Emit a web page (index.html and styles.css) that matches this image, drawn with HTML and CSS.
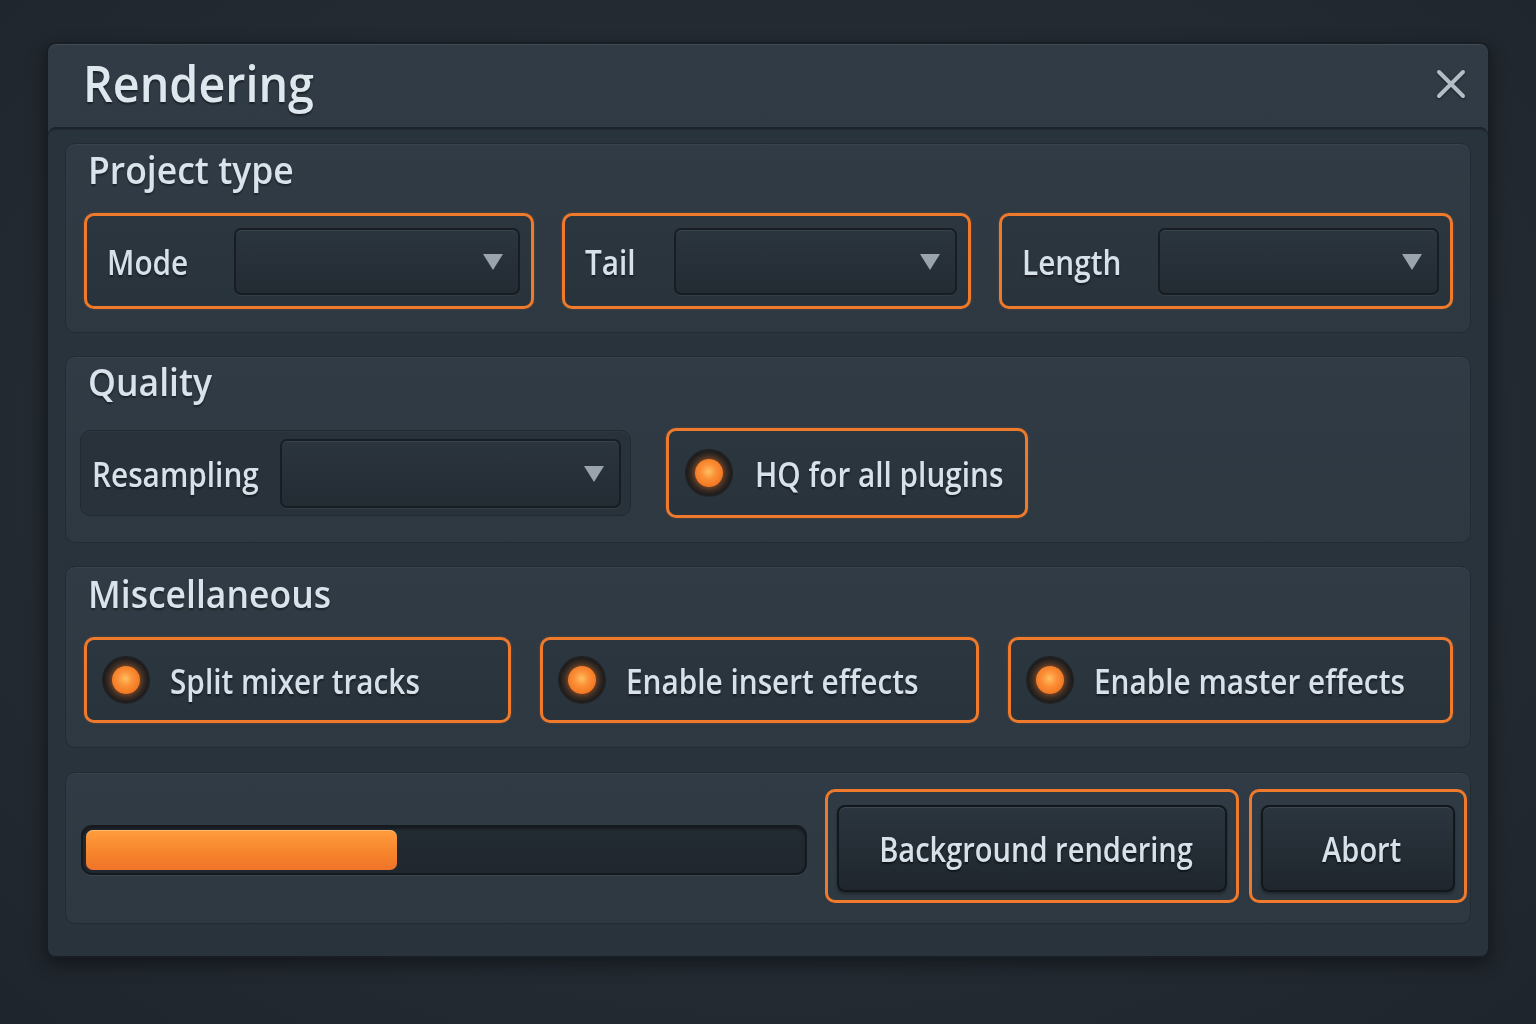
FILE: index.html
```html
<!DOCTYPE html>
<html lang="en">
<head>
<meta charset="utf-8">
<title>Rendering</title>
<link rel="stylesheet" href="styles.css">
</head>
<body>
<div class="dialog">
  <header class="titlebar">
    <h1 class="title"><span class="cond-title">Rendering</span></h1>
    <button class="close" aria-label="Close">
      <svg viewBox="0 0 30 30" width="30" height="30"><path d="M3 3 L27 27 M27 3 L3 27" stroke="#b3bdc5" stroke-width="4" stroke-linecap="round"/></svg>
    </button>
  </header>
  <main class="body">
    <section class="panel panel-project">
      <h2 class="panel-title"><span class="cond-h">Project type</span></h2>
      <div class="row-project">
        <div class="field hl">
          <span class="label">Mode</span>
          <div class="select s-mode"><span class="arrow"></span></div>
        </div>
        <div class="field hl">
          <span class="label">Tail</span>
          <div class="select s-tail"><span class="arrow"></span></div>
        </div>
        <div class="field hl">
          <span class="label">Length</span>
          <div class="select s-length"><span class="arrow"></span></div>
        </div>
      </div>
    </section>

    <section class="panel panel-quality">
      <h2 class="panel-title"><span class="cond-h">Quality</span></h2>
      <div class="row-quality">
        <div class="field plain">
          <span class="label">Resampling</span>
          <div class="select s-resamp"><span class="arrow"></span></div>
        </div>
        <div class="toggle hl t-hq">
          <span class="led"></span>
          <span class="label">HQ for all plugins</span>
        </div>
      </div>
    </section>

    <section class="panel panel-misc">
      <h2 class="panel-title"><span class="cond-h">Miscellaneous</span></h2>
      <div class="row-misc">
        <div class="toggle hl"><span class="led"></span><span class="label">Split mixer tracks</span></div>
        <div class="toggle hl"><span class="led"></span><span class="label">Enable insert effects</span></div>
        <div class="toggle hl"><span class="led"></span><span class="label">Enable master effects</span></div>
      </div>
    </section>

    <section class="panel panel-bottom">
      <div class="progress"><div class="fill" style="width: 43.5%"></div></div>
      <div class="btn-wrap w-bg"><button class="btn btn-bg"><span class="btn-text">Background rendering</span></button></div>
      <div class="btn-wrap w-abort"><button class="btn btn-abort"><span class="btn-text">Abort</span></button></div>
    </section>
  </main>
</div>
</body>
</html>
```

FILE: styles.css
```css
* { box-sizing: border-box; }
html, body { margin: 0; padding: 0; }
body {
  width: 1536px;
  height: 1024px;
  background: radial-gradient(ellipse at 50% 45%, #2a323b 0%, #222930 70%, #1f252c 100%);
  font-family: "Open Sans", "Noto Sans", "DejaVu Sans", sans-serif;
  color: #d7e1ea;
  overflow: hidden;
  padding: 42px 0 0 46px;
}
.dialog {
  width: 1444px;
  height: 916px;
  background: linear-gradient(#303b45, #2c3740);
  border: 2px solid #181e24;
  border-radius: 10px;
  box-shadow: 0 6px 18px rgba(0,0,0,0.45), inset 0 1px 0 rgba(255,255,255,0.08);
  display: flex;
  flex-direction: column;
}
.titlebar {
  height: 83px;
  display: flex;
  align-items: center;
  justify-content: space-between;
  padding: 0 22px 0 35px;
  flex: none;
}
.title {
  margin: 0 0 6px 0;
  font-size: 51px;
  font-weight: 600;
  line-height: 1;
  color: #dfe7ee;
  text-shadow: 0 2px 2px rgba(0,0,0,0.45);
}
.cond-title {
  display: inline-block;
  transform: scaleX(0.915);
  transform-origin: left center;
}
.close {
  background: none;
  border: 0;
  padding: 0;
  width: 30px;
  height: 30px;
  display: block;
  margin-bottom: 4px;
  filter: drop-shadow(0 1px 1px rgba(0,0,0,0.5));
}
.close svg { display: block; }
.body {
  flex: 1;
  background: #29333c;
  border-top: 2px solid #1d242b;
  border-radius: 8px;
  padding: 14px 17px 0 17px;
  display: flex;
  flex-direction: column;
  gap: 23px;
  box-shadow: inset 0 1px 0 rgba(0,0,0,0.2);
}
.panel {
  background: linear-gradient(#303b45, #2d3841);
  border: 1px solid #232b33;
  border-radius: 10px;
  box-shadow: inset 0 1px 0 rgba(255,255,255,0.04);
}
.panel-title {
  margin: 0;
  font-size: 37px;
  font-weight: 600;
  line-height: 44px;
  color: #dae3eb;
  text-shadow: 0 2px 2px rgba(0,0,0,0.4);
  padding-left: 22px;
}
.cond-h {
  display: inline-block;
  transform: scaleX(0.96);
  transform-origin: left center;
}
.panel-project { height: 190px; padding-top: 4px; }
.panel-quality { height: 187px; padding-top: 3px; }
.panel-misc { height: 182px; padding-top: 5px; }
.panel-bottom {
  height: 152px;
  display: flex;
  align-items: center;
  padding: 0 3px 6px 15px;
  margin-top: 1px;
}

.hl {
  border: 3px solid #f07a2c;
  border-radius: 10px;
  background: linear-gradient(#2c363f, #29333b);
  box-shadow: 0 0 3px rgba(240,122,44,0.25);
}
.label {
  display: inline-block;
  font-size: 35px;
  font-weight: 600;
  line-height: 1;
  color: #d7e1ea;
  text-shadow: 0 2px 2px rgba(0,0,0,0.45);
  white-space: nowrap;
  transform: scaleX(0.85);
  transform-origin: left center;
}

.row-project {
  display: grid;
  grid-template-columns: 450px 409px 454px;
  column-gap: 28px;
  margin-top: 21px;
  padding-left: 18px;
}
.field {
  display: flex;
  align-items: center;
}
.field .label { flex: 1; min-width: 0; }
.row-project .field { height: 96px; padding: 0 11px 0 20px; }
.select {
  position: relative;
  height: 67px;
  background: linear-gradient(#2b353e, #232b33);
  border: 2px solid #171d23;
  border-radius: 7px;
  box-shadow: inset 0 1px 0 rgba(255,255,255,0.07), 0 1px 0 rgba(255,255,255,0.05);
  flex: none;
}
.s-mode { width: 286px; }
.s-tail { width: 283px; }
.s-length { width: 281px; }
.s-resamp { width: 341px; height: 69px; }
.arrow {
  position: absolute;
  right: 15px;
  top: 50%;
  margin-top: -7px;
  width: 0;
  height: 0;
  border-left: 10px solid transparent;
  border-right: 10px solid transparent;
  border-top: 16px solid #9aa4ad;
}

.row-quality {
  display: flex;
  align-items: center;
  margin-top: 24px;
  padding-left: 14px;
  gap: 35px;
}
.field.plain {
  width: 551px;
  height: 86px;
  background: #29323b;
  border: 1px solid #222a31;
  border-radius: 10px;
  padding: 0 9px 0 11px;
  box-shadow: inset 0 1px 0 rgba(255,255,255,0.03);
}
.toggle {
  display: flex;
  align-items: center;
  height: 86px;
}
.t-hq { width: 362px; height: 90px; padding-left: 17px; gap: 23px; }
.led {
  flex: none;
  width: 46px;
  height: 46px;
  border-radius: 50%;
  background: radial-gradient(closest-side, #5a3522 0%, #3b2c25 62%, #2b2522 85%, #1d1a18 100%);
  box-shadow: 0 0 0 1px rgba(0,0,0,0.4), 0 1px 1px rgba(255,255,255,0.06);
  position: relative;
}
.led::after {
  content: "";
  position: absolute;
  left: 9px;
  top: 9px;
  width: 28px;
  height: 28px;
  border-radius: 50%;
  background: radial-gradient(circle at 48% 45%, #ffc060 0%, #fb9038 35%, #f2741f 75%, #d05a14 100%);
  box-shadow: 0 0 6px rgba(255,130,40,0.55);
}

.row-misc {
  display: grid;
  grid-template-columns: 427px 439px 445px;
  column-gap: 29px;
  margin-top: 21px;
  padding-left: 18px;
}
.row-misc .toggle { padding-left: 16px; gap: 21px; }

.progress {
  width: 726px;
  height: 50px;
  margin-top: 9px;
  background: linear-gradient(#222a32, #20272e);
  border: 2px solid #151a1f;
  border-radius: 11px;
  padding: 3px;
  box-shadow: inset 0 2px 2px rgba(0,0,0,0.35), 0 1px 0 rgba(255,255,255,0.06);
  flex: none;
}
.fill {
  height: 100%;
  border-radius: 7px;
  background: linear-gradient(#ff9d3e, #f6852c 55%, #f0732a);
  box-shadow: inset 0 1px 0 rgba(255,210,150,0.5);
}
.btn-wrap {
  border: 3px solid #f07a2c;
  border-radius: 10px;
  height: 114px;
  margin-top: 1px;
  padding: 13px 9px 8px 9px;
  display: flex;
}
.w-bg { width: 414px; margin-left: 18px; }
.w-abort { width: 220px; margin-left: 10px; }
.btn {
  flex: 1;
  font-family: inherit;
  font-size: 35px;
  font-weight: 600;
  color: #d7e1ea;
  text-shadow: 0 2px 2px rgba(0,0,0,0.5);
  background: linear-gradient(#2b353e, #1f262d);
  border: 2px solid #12171c;
  border-radius: 8px;
  box-shadow: inset 0 1px 0 rgba(255,255,255,0.1), 0 2px 3px rgba(0,0,0,0.35);
  padding: 0;
  white-space: nowrap;
}
.btn-bg { padding-left: 8px; }
.btn-abort { padding-left: 8px; }
.btn-text {
  display: inline-block;
  transform: scaleX(0.83);
  transform-origin: center;
}
```
